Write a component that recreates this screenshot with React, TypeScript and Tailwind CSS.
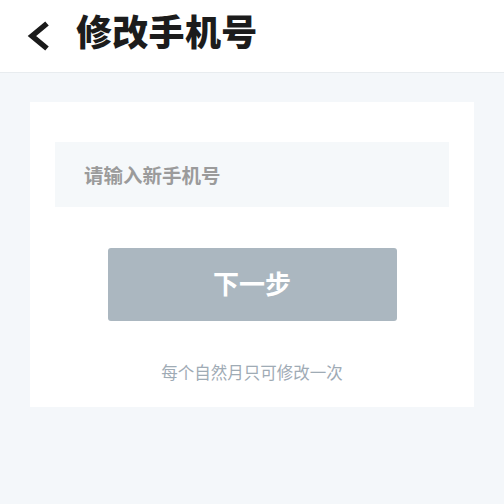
const App = () => {
  return (
    <div
      className="w-[504px] h-[504px] bg-[#f4f7fa] overflow-hidden"
      style={{ fontFamily: '"Noto Sans CJK SC", "Noto Sans", sans-serif' }}
    >
      {/* header */}
      <div className="h-[73px] bg-white border-b border-[#e8ecef] flex items-center">
        <svg className="ml-[26px] mb-[1px] w-[24px] h-[30px]" viewBox="0 0 24 30" fill="none">
          <path d="M21 2.5 L6 15 L21 27.5" stroke="#1a1a1a" strokeWidth="5.5" strokeLinejoin="miter" />
        </svg>
        <h1 className="ml-[26px] mb-[12px] text-[36px] leading-none font-black text-[#1c1c1c] tracking-[0.3px]">
          修改手机号
        </h1>
      </div>

      <div className="px-[30px] pt-[29px]">
        <div className="bg-white px-[25px] pt-[40px] pb-[22px]">
          <div className="h-[65px] bg-[#f5f8fa] flex items-center pl-[29px]">
            <span className="text-[19.5px] font-bold text-[#9b9b9b]">请输入新手机号</span>
          </div>
          <button className="mt-[41px] mx-auto flex items-center justify-center w-[289px] h-[73px] pb-[4px] rounded-[3px] bg-[#abb7c0] text-white text-[26px] font-bold">
            下一步
          </button>
          <p className="mt-[38px] text-center text-[16.5px] leading-[26px] text-[#9fabb5]">
            每个自然月只可修改一次
          </p>
        </div>
      </div>
    </div>
  );
};

export default App;
